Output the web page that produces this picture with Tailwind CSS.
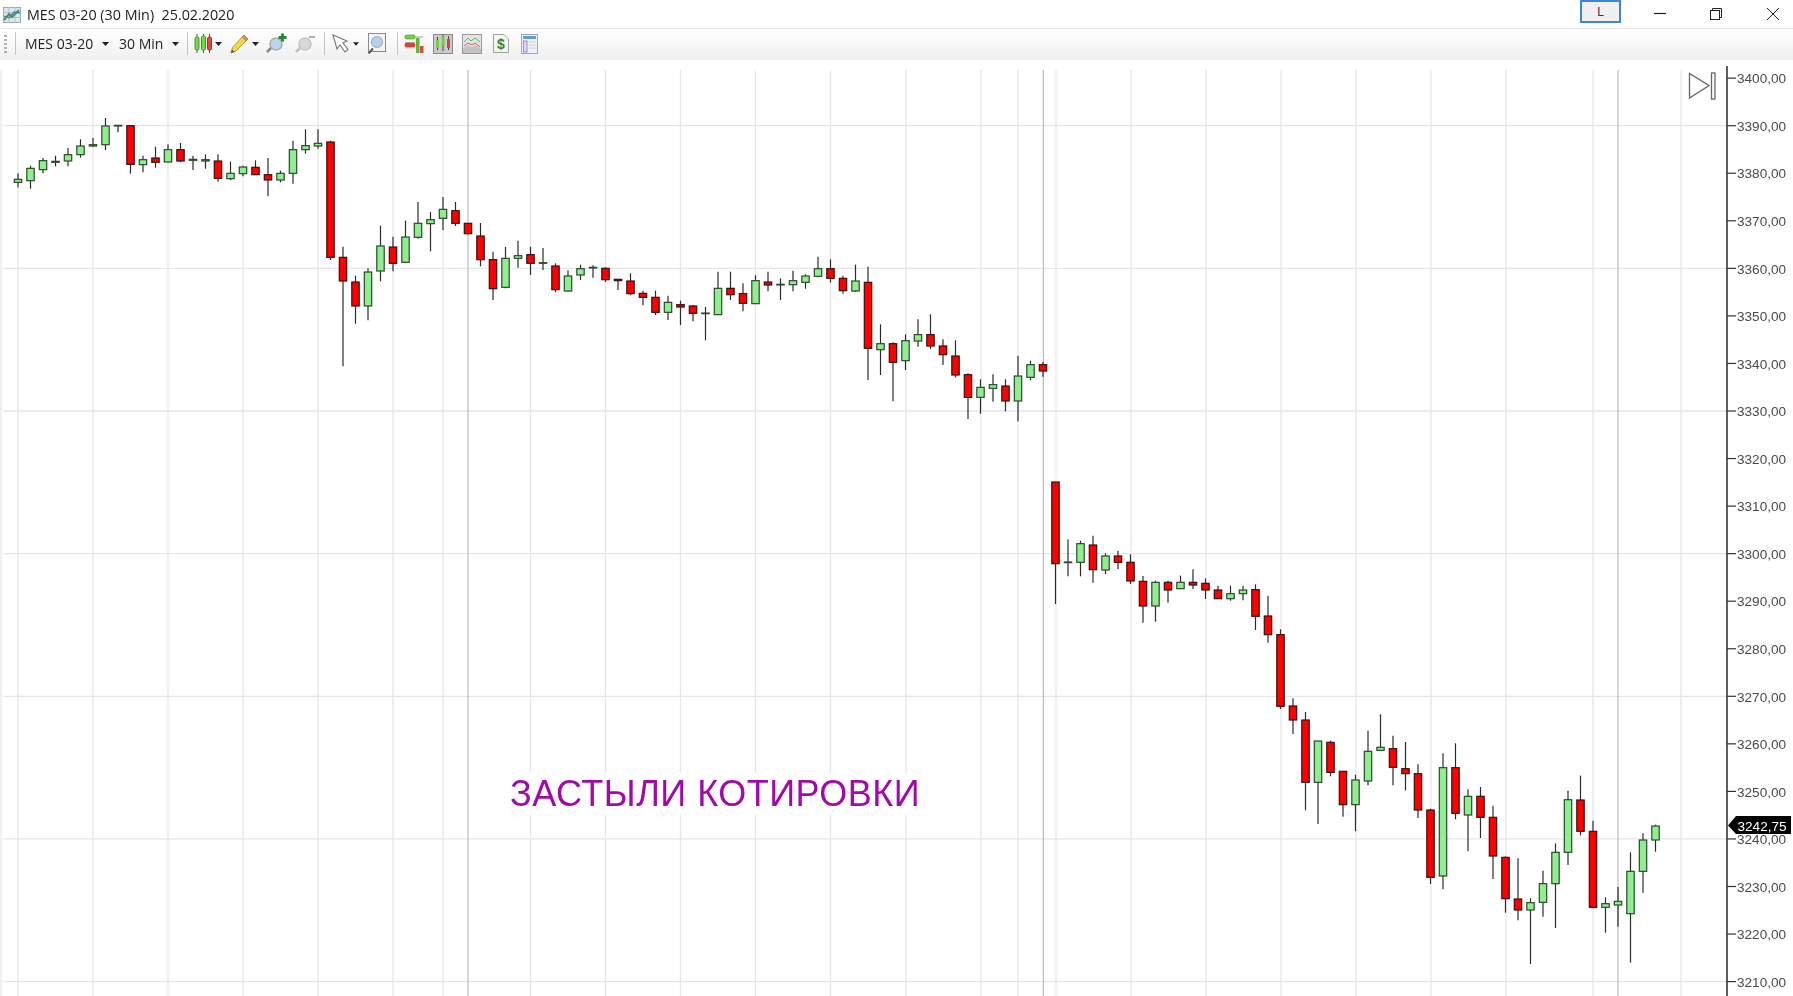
<!DOCTYPE html>
<html>
<head>
<meta charset="utf-8">
<script src="https://cdn.jsdelivr.net/npm/@tailwindcss/browser@4"></script>
<title>MES 03-20</title>
</head>
<body class="bg-white overflow-hidden">
<div class="w-[1793px] h-[996px] flex flex-col font-['Open_Sans',sans-serif] text-[#222]">

  <!-- title bar -->
  <header class="h-[29px] shrink-0 flex items-center border-b border-[#e3e3e3] bg-white">
    <svg class="ml-[3px] mt-[2px]" width="18" height="16" viewBox="0 0 18 16">
      <rect x="0.5" y="0.5" width="17" height="15" fill="#dfe6ee" stroke="#9aa8b8"/>
      <path d="M0 5.5H18M0 10.5H18M6 0V16M12 0V16" stroke="#b4c0cf" stroke-width="1"/>
      <path d="M1 13L6 7L9 10L16 3" fill="none" stroke="#3f9a3c" stroke-width="2"/>
      <path d="M1 9L6 11L11 5L17 6" fill="none" stroke="#4a7fc0" stroke-width="1.3"/>
    </svg>
    <span class="ml-[6px] mt-[2px] text-[14.3px] whitespace-pre text-[#222] blur-[0.3px]">MES 03-20 (30 Min)  25.02.2020</span>
    <div class="ml-auto flex items-start self-start h-[24px]">
      <div class="w-[41px] h-[23px] flex items-center justify-center border-2 border-[#3d88d4] bg-[#f0f0f0] text-[12px] text-[#333] font-['Liberation_Sans',sans-serif]">L</div>
      <svg class="ml-[33px] mt-[8px]" width="12" height="12" viewBox="0 0 12 12"><path d="M0 5.5H12" stroke="#222" stroke-width="1.2"/></svg>
      <svg class="ml-[44px] mt-[8px]" width="12" height="12" viewBox="0 0 12 12" fill="none" stroke="#222"><rect x="0.5" y="2.5" width="9" height="9"/><path d="M2.5 2.5V0.5H11.5V9.5H9.5"/></svg>
      <svg class="ml-[45px] mt-[8px] mr-[14px]" width="12" height="12" viewBox="0 0 12 12" fill="none" stroke="#222"><path d="M0 0L12 12M12 0L0 12"/></svg>
    </div>
  </header>

  <!-- toolbar -->
  <nav class="h-[31px] shrink-0 flex items-center pb-[2px] bg-gradient-to-b from-white to-[#f0f0f0] text-[14px] text-[#222]">
    <svg class="ml-[4px]" width="3" height="18" viewBox="0 0 3 18" fill="#b0b0b0"><rect y="0" width="3" height="2"/><rect y="4" width="3" height="2"/><rect y="8" width="3" height="2"/><rect y="12" width="3" height="2"/><rect y="16" width="3" height="2"/></svg>
    <div class="ml-[8px] w-px h-[23px] bg-[#c4c4c4]"></div>
    <span class="ml-[9px] w-[70px] whitespace-nowrap blur-[0.3px]">MES 03-20</span>
    <svg class="ml-[7px]" width="7" height="4" viewBox="0 0 7 4"><path d="M0 0H7L3.5 4Z" fill="#222"/></svg>
    <span class="ml-[10px] w-[45px] whitespace-nowrap blur-[0.3px]">30 Min</span>
    <svg class="ml-[8px]" width="7" height="4" viewBox="0 0 7 4"><path d="M0 0H7L3.5 4Z" fill="#222"/></svg>
    <div class="ml-[8px] w-px h-[23px] bg-[#c4c4c4]"></div>

    <svg class="ml-[6px]" width="19" height="19" viewBox="0 0 19 19" stroke="#4a5a3a">
      <path d="M3 0V19M9.5 0V19M15.5 0V19" stroke-width="1"/>
      <rect x="1" y="3" width="4" height="13" rx="1.5" fill="#6fdc44" stroke="#4f8f30"/>
      <rect x="7.5" y="2" width="4" height="14" rx="1.5" fill="#6fdc44" stroke="#4f8f30"/>
      <rect x="13.5" y="3" width="4" height="13" rx="1.5" fill="#e8483c" stroke="#a03028"/>
    </svg>
    <svg class="ml-[2px]" width="7" height="4" viewBox="0 0 7 4"><path d="M0 0H7L3.5 4Z" fill="#222"/></svg>

    <svg class="ml-[8px]" width="19" height="20" viewBox="0 0 19 20">
      <path d="M14 1L18 5L6 17L1 19L2.5 13.5Z" fill="#f2d64b" stroke="#b89a30"/>
      <path d="M14 1L18 5L16 7L12 3Z" fill="#e08a70" stroke="#b06a50" stroke-width="0.6"/>
      <path d="M1 19L2 15.5L4.5 18Z" fill="#555"/>
    </svg>
    <svg class="ml-[3px]" width="7" height="4" viewBox="0 0 7 4"><path d="M0 0H7L3.5 4Z" fill="#222"/></svg>

    <svg class="ml-[7px]" width="21" height="21" viewBox="0 0 21 21">
      <path d="M1 19L7 13" stroke="#8a8a8a" stroke-width="2.6"/>
      <circle cx="10" cy="11" r="6" fill="#bcd6e8" stroke="#a8adb2" stroke-width="1.6"/>
      <path d="M16.5 0.5V8.5M12.5 4.5H20.5" stroke="#14912b" stroke-width="2.8"/>
    </svg>
    <svg class="ml-[8px]" width="20" height="20" viewBox="0 0 20 20">
      <path d="M1 18L7 12" stroke="#c0c0c0" stroke-width="2.6"/>
      <circle cx="10" cy="10" r="6" fill="#d9d9d9" stroke="#c4c4c4" stroke-width="1.6"/>
      <path d="M14 3H20" stroke="#b0b0b0" stroke-width="2"/>
    </svg>
    <div class="ml-[9px] w-px h-[23px] bg-[#c4c4c4]"></div>

    <svg class="ml-[7px]" width="17" height="19" viewBox="0 0 17 19">
      <path d="M1 1L5 15L8 11L13 18L16 15.5L11 9L15 7Z" fill="#fff" stroke="#777" stroke-width="1.1"/>
    </svg>
    <svg class="ml-[4px]" width="6" height="4" viewBox="0 0 7 4"><path d="M0 0H7L3.5 4Z" fill="#222"/></svg>
    <svg class="ml-[9px]" width="18" height="21" viewBox="0 0 18 21">
      <rect x="0.5" y="0.5" width="17" height="18" fill="#f5f5f5" stroke="#8a8a8a"/>
      <circle cx="9" cy="9" r="5.5" fill="#b4d2ee" stroke="#a8aeb4" stroke-width="1.2"/>
      <path d="M0.5 20.5L5 15.5" stroke="#555" stroke-width="2"/>
    </svg>
    <div class="ml-[11px] w-px h-[23px] bg-[#c4c4c4]"></div>

    <svg class="ml-[6px]" width="20" height="20" viewBox="0 0 20 20">
      <rect x="1" y="1" width="10" height="4" rx="1.5" fill="#6fd13c" stroke="#4c8f2a" stroke-width="0.6"/>
      <path d="M11 3H19" stroke="#9a9a9a"/>
      <path d="M1 8.5H15M1 14H11" stroke="#c9c9c9"/>
      <rect x="1" y="9" width="10" height="4" rx="1.5" fill="#e2403a" stroke="#a33" stroke-width="0.6"/>
      <rect x="12" y="4" width="3.5" height="15" fill="#5cb83a"/>
      <rect x="16" y="12" width="3.5" height="7" fill="#d94a42"/>
    </svg>
    <svg class="ml-[9px]" width="20" height="20" viewBox="0 0 20 20">
      <rect x="0.5" y="0.5" width="19" height="19" fill="#c9c9c9" stroke="#8a8a8a"/>
      <path d="M4.5 3V16M10 1V17M15.5 2V16" stroke="#444"/>
      <rect x="3" y="6" width="3" height="8" fill="#6fd13c"/>
      <rect x="8.5" y="3" width="3" height="9" fill="#6fd13c"/>
      <rect x="14" y="5" width="3" height="9" fill="#e2403a"/>
    </svg>
    <svg class="ml-[9px]" width="20" height="20" viewBox="0 0 20 20">
      <rect x="0.5" y="0.5" width="19" height="19" fill="#e4e4e4" stroke="#999"/>
      <path d="M2 8L6 4L9 7L13 4L18 8" fill="none" stroke="#5cb85c"/>
      <path d="M2 12L6 9L10 11L13 9L18 13" fill="none" stroke="#d9605a"/>
      <path d="M1 14L6 11L10 13L13 11L19 15V19H1Z" fill="#c4c4c4"/>
    </svg>
    <svg class="ml-[11px]" width="16" height="19" viewBox="0 0 16 19">
      <path d="M0.5 0.5H11L15.5 5V18.5H0.5Z" fill="#f4f4f4" stroke="#a0a0a0"/>
      <text x="8" y="15" text-anchor="middle" font-family="Liberation Sans" font-weight="700" font-size="14" fill="#1e8a3c">$</text>
    </svg>
    <svg class="ml-[12px]" width="17" height="20" viewBox="0 0 17 20">
      <rect x="0.5" y="0.5" width="16" height="19" fill="#eef3f8" stroke="#a0a8b2"/>
      <rect x="2" y="2" width="13" height="3" fill="#5c9bd8"/>
      <rect x="2.5" y="7" width="3.5" height="11" fill="#e4d4f6" stroke="#9a6fd0" stroke-width="0.8"/>
      <path d="M8 8H15M8 11H15M8 14H15" stroke="#c4ccd6"/>
    </svg>
  </nav>

  <!-- chart -->
  <main class="relative flex-1 bg-white">
    <svg id="chart" class="block blur-[0.35px]" width="1793" height="936" viewBox="0 60 1793 936"></svg>
    <div class="absolute left-[507px] top-[713px] h-[42px] px-[3px] bg-white flex items-center text-[36px] tracking-[0.5px] leading-none text-[#a208ab] font-['Liberation_Sans',sans-serif] whitespace-nowrap blur-[0.3px]">ЗАСТЫЛИ КОТИРОВКИ</div>
    <svg class="absolute left-[1688px] top-[12px]" width="28" height="28" viewBox="0 0 28 28" fill="none" stroke="#666" stroke-width="1.3">
      <path d="M1.5 1.5V26L21 13.5Z"/>
      <rect x="23.5" y="1" width="3.5" height="26"/>
    </svg>
  </main>
</div>

<script>
const G=1,R=0;
const c=[];
// section data are read from the chart: [hi, top, bottom, lo, up]
const a=[[220,238,247,262,G],[197,205,242,266,G],[174,182,209,220,G],[167,184,187,199,G],[144,164,183,199,G],[118,138,164,173,G],[114,134,138,141,G],[54,78,134,150,G],[75,76,78,97,G],[76,77,193,221,R],[167,179,194,217,G],[140,174,187,203,R],[133,149,186,187,G],[129,149,183,187,R],[167,178,181,210,G],[163,179,183,206,G],[163,183,235,245,R],[185,220,236,240,G],[197,201,221,229,G],[181,202,224,225,R],[174,224,240,289,R],[212,220,240,247,G],[122,149,220,251,G],[88,137,149,161,G],[88,130,138,146,G],[122,126,472,480,R],[440,472,543,799,R],[527,546,618,671,R],[505,516,618,661,G],[377,438,513,544,G],[410,441,490,514,R],[362,411,487,487,G],[306,370,412,416,G],[336,359,371,454,G],[291,328,355,390,G]];
a.forEach(v=>c.push(v.slice(0,4).map(z=>100+z/3).concat(v[4])));
const b=[[36,62,100,108,R],[100,100,131,134,R],[99,138,209,229,R],[185,209,296,330,R],[171,205,292,295,G],[152,197,205,233,G],[170,194,220,255,R],[174,218,220,240,G],[220,228,299,307,R],[241,258,303,306,G],[224,236,255,270,G],[226,232,234,263,G],[232,235,269,276,R],[267,268,272,300,R],[250,273,311,315,R],[302,310,322,346,R],[302,322,367,375,R],[317,337,367,390,G],[332,344,351,405,R],[345,348,370,394,R],[351,369,371,451,G],[245,295,374,374,G],[245,295,314,330,R],[280,311,340,364,R],[256,272,341,342,G],[245,276,285,304,R],[265,283,284,330,G],[242,272,284,304,G],[253,258,277,296,G],[200,236,259,262,G],[208,236,265,278,R],[257,265,302,311,R],[224,273,303,306,G]];
b.forEach(v=>c.push(v.slice(0,4).map(z=>190+z/3).concat(v[4])));
const d=[[50,97,295,390,R],[223,281,299,375,G],[277,281,337,454,R],[253,272,332,360,G],[208,254,273,290,G],[193,254,288,297,R],[268,288,314,345,R],[271,318,375,382,R],[370,374,442,507,R],[388,412,442,491,G],[373,404,415,455,G],[388,408,453,484,R],[317,378,453,514,G],[332,344,382,391,G],[336,344,363,380,R],[696,696,941,1062,R],[868,936,938,979,G],[872,881,937,979,G],[857,885,959,998,R],[910,918,960,972,G],[902,918,937,957,R],[913,937,993,1002,R],[978,994,1068,1118,R],[992,997,1068,1115,G],[992,997,1020,1058,R],[977,997,1016,1016,G],[958,997,1005,1017,R],[985,1000,1020,1047,R],[1008,1020,1046,1047,R],[1007,1031,1046,1052,G],[1007,1020,1031,1051,G],[1003,1019,1099,1140,R]];
d.forEach(v=>c.push(v.slice(0,4).map(z=>250+z/3).concat(v[4])));
const e=[[-13,48,104,128,R],[88,104,319,327,R],[295,318,360,402,R],[336,360,547,631,R],[423,423,547,672,G],[422,427,517,529,R],[513,514,614,650,R],[524,540,614,694,G],[392,454,543,556,G],[343,442,451,451,G],[407,446,502,556,R],[426,506,521,571,R],[493,521,630,654,R],[626,630,832,852,R],[460,503,828,868,G],[430,503,640,658,R],[568,589,645,754,G],[561,589,652,714,R],[617,652,768,837,R],[769,772,896,938,R],[775,897,930,961,R],[895,908,930,1092,G],[812,851,907,950,G],[730,757,851,984,G],[572,599,757,795,G],[527,600,694,706,R],[662,694,922,923,R],[892,911,922,998,G],[861,904,915,980,G],[757,814,941,1088,G],[700,720,814,878,G],[674,678,720,755,G]];
e.forEach(v=>c.push(v.slice(0,4).map(z=>600+z/3).concat(v[4])));

const Y=p=>125.7+(3390-p)*4.755;
let s='';
// grid
[1,18,93,168,243,318,393,443,530.5,605.5,680.5,755.5,830.5,906,981,1018,1056,1131,1206,1281,1356,1431,1506,1593,1681].forEach(x=>{
  s+=`<line x1="${x}" x2="${x}" y1="70" y2="996" stroke="#e6e6e6" stroke-width="1.3"/>`;
});
[3390,3360,3330,3300,3270,3240,3210].forEach(p=>{
  s+=`<line x1="3" x2="1727" y1="${Y(p)}" y2="${Y(p)}" stroke="#e6e6e6" stroke-width="1.3"/>`;
});
[468,1043.3,1618].forEach(x=>{
  s+=`<line x1="${x}" x2="${x}" y1="70" y2="996" stroke="#b0b0b0" stroke-width="1"/>`;
});
// candles
c.forEach((v,i)=>{
  const x=18+12.5*i,[h,t,bt,l,u]=v;
  s+=`<line x1="${x}" x2="${x}" y1="${h}" y2="${l}" stroke="#2b2b2b" stroke-width="1.2"/>`;
  s+=`<rect x="${x-3.7}" y="${t}" width="7.4" height="${Math.max(bt-t,0.6)}" fill="${u?'#90ee90':'#ff0000'}" stroke="${u?'#2c4a2c':'#3a1010'}" stroke-width="1.2"/>`;
});
// axis
s+=`<line x1="1727" x2="1727" y1="66" y2="996" stroke="#1a1a1a" stroke-width="1.4"/>`;
for(let p=3400;p>=3210;p-=10){
  const y=Y(p);
  s+=`<line x1="1727" x2="1736" y1="${y}" y2="${y}" stroke="#333" stroke-width="1.2"/>`;
  s+=`<text x="1737" y="${y+5.2}" font-family="Liberation Sans" font-size="13.6" fill="#4a4a4a">${p},00</text>`;
}
// last price tag
s+=`<path d="M1728 825.5L1736 816H1791V834H1736Z" fill="#000"/>`;
s+=`<text x="1737.5" y="830.5" font-family="Liberation Sans" font-size="13.6" fill="#fff">3242,75</text>`;
document.getElementById('chart').innerHTML=s;
</script>
</body>
</html>
